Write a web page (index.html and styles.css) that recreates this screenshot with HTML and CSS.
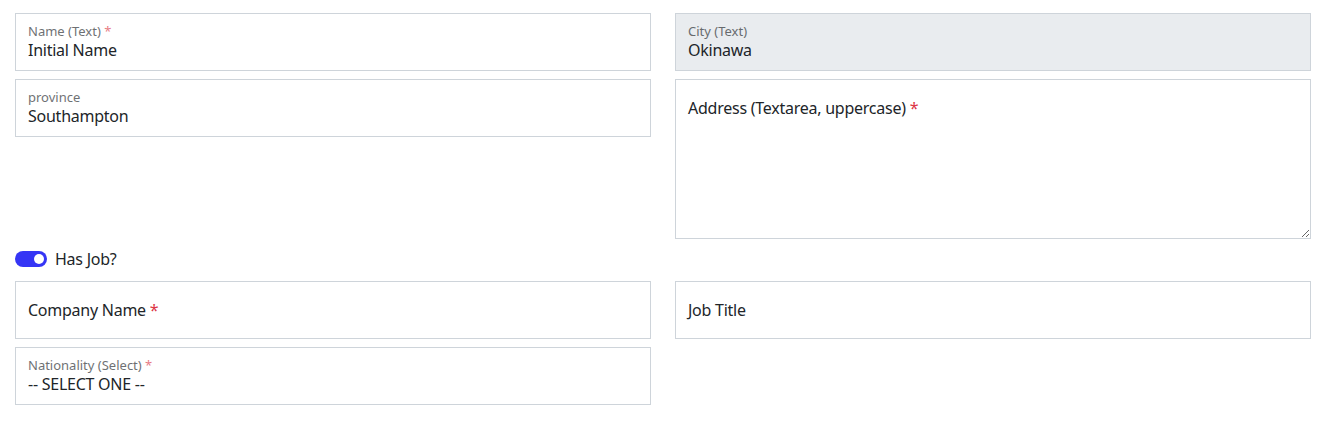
FILE: index.html
```html
<!DOCTYPE html>
<html lang="en">
<head>
<meta charset="utf-8">
<title>Form</title>
<link rel="stylesheet" href="styles.css">
</head>
<body>
<form class="grid">
  <div class="field">
    <span class="label small">Name (Text) <span class="req">*</span></span>
    <span class="value">Initial Name</span>
  </div>
  <div class="field disabled">
    <span class="label small">City (Text)</span>
    <span class="value">Okinawa</span>
  </div>
  <div class="field">
    <span class="label small">province</span>
    <span class="value">Southampton</span>
  </div>
  <div class="field tall">
    <span class="label big">Address (Textarea, uppercase) <span class="req">*</span></span>
  </div>
  <div class="toggle-row">
    <span class="switch"><span class="knob"></span></span>
    <span class="toggle-label">Has Job?</span>
  </div>
  <div class="field empty">
    <span class="label big">Company Name <span class="req">*</span></span>
  </div>
  <div class="field empty">
    <span class="label big">Job Title</span>
  </div>
  <div class="field">
    <span class="label small">Nationality (Select) <span class="req">*</span></span>
    <span class="value">-- SELECT ONE --</span>
  </div>
</form>
</body>
</html>
```
FILE: styles.css
```css
* { box-sizing: border-box; }
body {
  margin: 0;
  padding: 13px 16px 0 15px;
  font-family: "Noto Sans", "Open Sans", sans-serif;
  color: #212529;
  background: #fff;
}
.grid {
  display: grid;
  grid-template-columns: 1fr 1fr;
  column-gap: 24px;
  row-gap: 8px;
  align-items: start;
}
.field {
  height: 58px;
  border: 1px solid #ced4da;
  background: #fff;
  padding: 9px 12px 8px;
  display: flex;
  flex-direction: column;
}
.field.disabled { background: #e9ecef; }
.field.tall {
  height: 160px;
  padding-top: 17px;
  resize: vertical;
  overflow: auto;
}
.field.empty {
  justify-content: center;
  padding-top: 0;
  padding-bottom: 0;
}
.label.small {
  font-size: 13px;
  line-height: 16px;
  opacity: 0.65;
}
.label.big {
  font-size: 16px;
  line-height: 22px;
  letter-spacing: -0.25px;
}
.req { color: #dc3545; }
.value {
  font-size: 16px;
  line-height: 22px;
  letter-spacing: -0.25px;
}
.toggle-row {
  grid-column: 1 / -1;
  height: 26px;
  padding-bottom: 2px;
  display: flex;
  align-items: center;
  gap: 8px;
}
.switch {
  width: 32px;
  height: 16px;
  border-radius: 8px;
  background: #3535f5;
  display: flex;
  align-items: center;
  justify-content: flex-end;
  padding-right: 3px;
}
.knob {
  width: 10px;
  height: 10px;
  border-radius: 50%;
  background: #fff;
}
.toggle-label {
  font-size: 16px;
  line-height: 22px;
  letter-spacing: -0.25px;
}
```
